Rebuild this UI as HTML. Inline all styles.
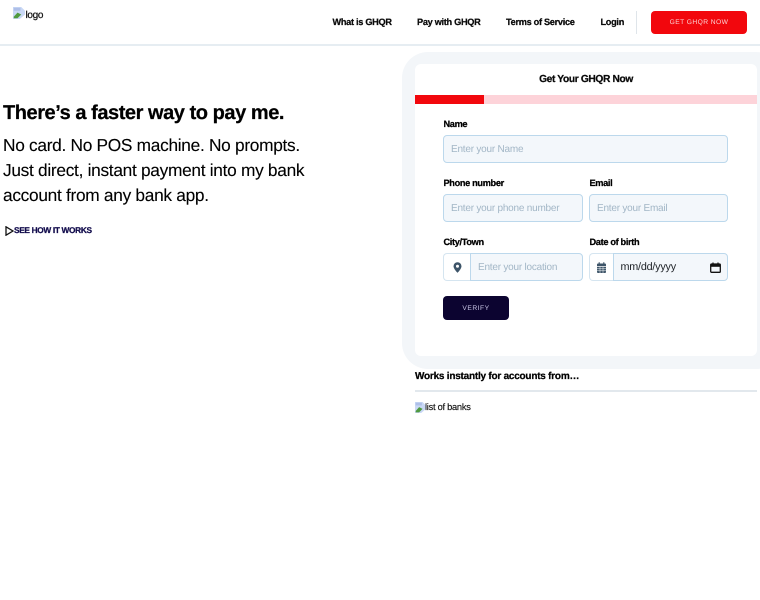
<!DOCTYPE html>
<html lang="en">
<head>
<meta charset="utf-8">
<title>GHQR</title>
<style>
html,body{margin:0;padding:0;background:#fff;}
body{width:760px;height:600px;overflow:hidden;position:relative;font-family:"Liberation Sans",Arial,sans-serif;color:#000;text-rendering:geometricPrecision;}
#p{position:absolute;left:0;top:0;width:760px;height:600px;filter:blur(.3px);overflow:hidden;}
.a{position:absolute;white-space:nowrap;}
.b{-webkit-text-stroke:.25px currentColor;}
.nav{top:15.500px;font-size:9.200px;letter-spacing:-.3px;line-height:13px;font-weight:bold;color:#0a0a0a;-webkit-text-stroke:.25px currentColor;}
.lbl{font-size:9.200px;letter-spacing:-.33px;line-height:13px;font-weight:bold;color:#000;-webkit-text-stroke:.25px currentColor;}
.in{position:absolute;box-sizing:border-box;height:28px;border:1.500px solid #bcd8ec;border-radius:4px;background:#f3f7fb;font-size:10px;letter-spacing:-.22px;line-height:27.500px;color:#a2b6c6;padding-left:7px;white-space:nowrap;}
.addon{position:absolute;box-sizing:border-box;height:28px;border:1.500px solid #d5e5f0;border-right:none;border-radius:4px 0 0 4px;background:#fff;}
</style>
</head>
<body>
<div id="p">
<div class="a" style="left:0;top:44px;width:760px;height:2px;background:#e6edf2;"></div>

<svg class="a" style="left:13px;top:7px" width="12" height="12" viewBox="0 0 16 16"><path d="M0 0H11L16 5V10L9 16H0Z" fill="#c9d8f5"/><path d="M1 1H10V5H1Z" fill="#aebfe8"/><path d="M1 13L6 7.500L11 10L6 15H1Z" fill="#4f9a3f"/></svg>
<div class="a" style="left:25.500px;top:8.500px;font-size:10px;letter-spacing:-.32px;line-height:14px;color:#111;-webkit-text-stroke:.25px currentColor;">logo</div>

<div class="a nav" style="left:332.500px;">What is GHQR</div>
<div class="a nav" style="left:417px;">Pay with GHQR</div>
<div class="a nav" style="left:506px;">Terms of Service</div>
<div class="a nav" style="left:600.500px;">Login</div>
<div class="a" style="left:636px;top:11px;width:1px;height:23px;background:#dfe5ea;"></div>
<div class="a" style="left:651px;top:11px;width:96px;height:23px;background:#f2070d;border-radius:4px;color:#fbd0d2;font-size:6.700px;letter-spacing:.42px;line-height:23.500px;text-align:center;">GET GHQR NOW</div>

<div class="a b" style="left:3px;top:100.500px;font-size:20px;letter-spacing:-.45px;line-height:25px;font-weight:bold;color:#000;">There’s a faster way to pay me.</div>
<div class="a" style="left:3px;top:133px;font-size:17.300px;letter-spacing:-.29px;line-height:25px;color:#000;-webkit-text-stroke:.1px #000;">No card. No POS machine. No prompts.<br>Just direct, instant payment into my bank<br>account from any bank app.</div>
<svg class="a" style="left:5px;top:226px" width="9" height="10" viewBox="0 0 9 10"><path d="M1 .8V9.200L8 5Z" fill="none" stroke="#111" stroke-width="1.300"/></svg>
<div class="a b" style="left:14px;top:224px;font-size:8.300px;letter-spacing:-.33px;line-height:12px;font-weight:bold;color:#130d4d;">SEE HOW IT WORKS</div>

<div class="a" style="left:402px;top:52px;width:380px;height:317px;background:#f3f6f9;border-radius:26px;"></div>
<div class="a" style="left:415px;top:64px;width:342px;height:292px;background:#fff;border-radius:6px;"></div>
<div class="a b" style="left:415px;top:72.500px;width:342px;text-align:center;font-size:10.200px;letter-spacing:-.35px;line-height:14px;font-weight:bold;color:#0a0a0a;">Get Your GHQR Now</div>
<div class="a" style="left:415px;top:95px;width:342px;height:9px;background:#fdd3d9;"></div>
<div class="a" style="left:415px;top:95px;width:68.500px;height:9px;background:#f2070d;"></div>

<div class="a lbl" style="left:443.500px;top:118px;">Name</div>
<div class="in" style="left:443px;top:135px;width:285px;">Enter your Name</div>

<div class="a lbl" style="left:443.500px;top:176.500px;">Phone number</div>
<div class="in" style="left:443px;top:194px;width:140px;">Enter your phone number</div>
<div class="a lbl" style="left:589.500px;top:176.500px;">Email</div>
<div class="in" style="left:589px;top:194px;width:139px;">Enter your Email</div>

<div class="a lbl" style="left:443.500px;top:235.500px;">City/Town</div>
<div class="addon" style="left:443px;top:253px;width:28px;"></div>
<svg class="a" style="left:453px;top:262px" width="9" height="11" viewBox="0 0 9 11"><path fill-rule="evenodd" d="M4.500 .2A4 4 0 0 0 .5 4.200C.5 6.800 4.500 10.800 4.500 10.800S8.500 6.800 8.500 4.200A4 4 0 0 0 4.500 .2ZM4.500 2.700A1.500 1.500 0 1 1 4.500 5.700A1.500 1.500 0 0 1 4.500 2.700Z" fill="#3d5468"/></svg>
<div class="in" style="left:470px;top:253px;width:113px;border-radius:0 4px 4px 0;">Enter your location</div>

<div class="a lbl" style="left:589.500px;top:235.500px;">Date of birth</div>
<div class="addon" style="left:589px;top:253px;width:25px;"></div>
<svg class="a" style="left:597px;top:262px" width="9" height="11" viewBox="0 0 9 11"><path d="M0 2.500A1 1 0 0 1 1 1.500H8A1 1 0 0 1 9 2.500V4H0ZM0 4.800H9V10A1 1 0 0 1 8 11H1A1 1 0 0 1 0 10Z" fill="#3d5468"/><path d="M2.200 .2V2M6.800 .2V2" stroke="#3d5468" stroke-width="1.100"/><path d="M3 4.800V11M6 4.800V11M0 6.800H9M0 8.800H9" stroke="#fff" stroke-width=".5"/></svg>
<div class="in" style="left:613px;top:253px;width:115px;border-radius:0 4px 4px 0;color:#1d2126;font-size:10.800px;letter-spacing:-.22px;line-height:27px;padding-left:6.500px;">mm/dd/yyyy</div>
<svg class="a" style="left:710px;top:262px" width="11" height="11" viewBox="0 0 11 11"><path d="M1.500 2H9.500A.8 .8 0 0 1 10.300 2.800V9.500A.8 .8 0 0 1 9.500 10.300H1.500A.8 .8 0 0 1 .7 9.500V2.800A.8 .8 0 0 1 1.500 2Z" fill="none" stroke="#111" stroke-width="1.300"/><path d="M.7 2.500H10.300V4.800H.7Z" fill="#111"/><path d="M3 .5V2M8 .5V2" stroke="#111" stroke-width="1.200"/></svg>

<div class="a" style="left:443px;top:296px;width:66px;height:24px;background:#0c0430;border-radius:4px;color:#c9c6e6;font-size:6.700px;letter-spacing:.5px;line-height:25px;text-align:center;">VERIFY</div>

<div class="a b" style="left:415px;top:369.500px;font-size:10px;letter-spacing:-.23px;line-height:14px;font-weight:bold;color:#000;">Works instantly for accounts from…</div>
<div class="a" style="left:415px;top:390px;width:342px;height:1.500px;background:#e2e8ed;"></div>
<svg class="a" style="left:415px;top:402px" width="11" height="11" viewBox="0 0 16 16"><path d="M0 0H11L16 5V10L9 16H0Z" fill="#c9d8f5"/><path d="M1 1H10V5H1Z" fill="#aebfe8"/><path d="M1 13L6 7.500L11 10L6 15H1Z" fill="#4f9a3f"/></svg>
<div class="a" style="left:425px;top:401px;font-size:9.300px;letter-spacing:-.27px;line-height:13px;color:#111;-webkit-text-stroke:.15px currentColor;">list of banks</div>
</div>
</body>
</html>
